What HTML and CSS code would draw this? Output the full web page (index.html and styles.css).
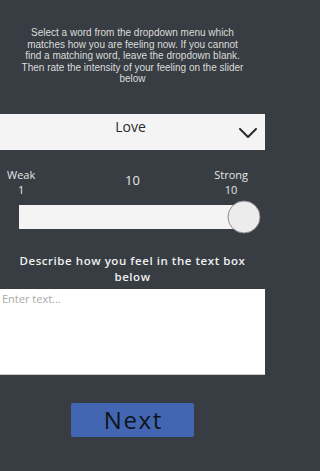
FILE: index.html
```html
<!DOCTYPE html>
<html lang="en">
<head>
<meta charset="utf-8">
<title>Feeling</title>
<link rel="stylesheet" href="styles.css">
</head>
<body>
<main class="screen">
  <p class="intro">Select a word from the dropdown menu which<br>matches how you are feeling now. If you cannot<br>find a matching word, leave the dropdown blank.<br>Then rate the intensity of your feeling on the slider<br>below</p>

  <div class="dropdown">
    <span class="dropdown-value">Love</span>
    <svg class="chevron" width="18" height="10" viewBox="0 0 18 10" aria-hidden="true">
      <polyline points="1,1 9,9 17,1" fill="none" stroke="#2b2b2b" stroke-width="2" stroke-linecap="round" stroke-linejoin="round"/>
    </svg>
  </div>

  <div class="rating">
    <div class="scale-end scale-min">Weak<br>1</div>
    <div class="current">10</div>
    <div class="scale-end scale-max">Strong<br>10</div>
  </div>

  <div class="slider">
    <div class="track"></div>
    <div class="knob"></div>
  </div>

  <p class="prompt">Describe how you feel in the text box<br>below</p>

  <textarea class="entry" placeholder="Enter text..."></textarea>

  <div class="actions">
    <button class="next" type="button">Next</button>
  </div>
</main>
</body>
</html>
```

FILE: styles.css
```css
html, body {
  margin: 0;
  padding: 0;
  background: #373d42;
}

.screen {
  width: 265px;
  height: 471px;
  overflow: hidden;
  font-family: "Open Sans", "Noto Sans", sans-serif;
}

.intro {
  margin: 0;
  padding: 27px 4px 0;
  font-family: "Liberation Sans", Arial, sans-serif;
  font-size: 10px;
  line-height: 11.5px;
  color: #dcdcdc;
  text-align: center;
}

.dropdown {
  margin-top: 29.5px;
  height: 36px;
  background: #f4f4f4;
  display: grid;
  grid-template-columns: 1fr auto 1fr;
  align-items: start;
}

.dropdown-value {
  grid-column: 2;
  padding-top: 3px;
  font-size: 14px;
  line-height: 19px;
  color: #2a2a2a;
  margin-right: 4px;
}

.chevron {
  grid-column: 3;
  justify-self: end;
  margin-top: 13.5px;
  margin-right: 8px;
}

.rating {
  margin-top: 17px;
  display: grid;
  grid-template-columns: 1fr auto 1fr;
  color: #e6e6e6;
}

.scale-end {
  font-size: 11px;
  line-height: 15px;
  text-align: center;
}

.scale-min {
  justify-self: start;
  margin-left: 7px;
}

.scale-max {
  justify-self: end;
  margin-right: 17px;
}

.current {
  font-size: 13px;
  line-height: 15px;
  padding-top: 6px;
}

.slider {
  position: relative;
  margin: 8px 21px 0 19px;
  height: 24px;
}

.track {
  height: 24px;
  background: #f4f4f4;
}

.knob {
  position: absolute;
  left: 100%;
  top: 50%;
  width: 31px;
  height: 31px;
  transform: translate(-50%, -50%);
  border-radius: 50%;
  background: #ececec;
  border: 1.5px solid #8c8c8c;
}

.prompt {
  margin: 24px 0 0;
  font-size: 11.5px;
  font-weight: 600;
  line-height: 15.5px;
  letter-spacing: 0.55px;
  color: #f0f0f0;
  text-align: center;
}

.entry {
  display: block;
  box-sizing: border-box;
  width: 100%;
  height: 86px;
  margin: 5px 0 0;
  padding: 2px 2px;
  border: none;
  border-bottom: 1px solid #c9c9c9;
  background: #ffffff;
  resize: none;
  font-family: "Open Sans", "Noto Sans", sans-serif;
  font-size: 11px;
  color: #333;
  outline: none;
}

.entry::placeholder {
  color: #a9a9a9;
}

.actions {
  display: flex;
  justify-content: center;
  margin-top: 28px;
}

.next {
  width: 123px;
  height: 34px;
  border: none;
  border-radius: 2px;
  background: #4266b1;
  color: #0e141a;
  font-family: "Open Sans", "Noto Sans", sans-serif;
  font-size: 24px;
  letter-spacing: 1.6px;
  padding: 0 0 0 1.6px;
  line-height: 34px;
}
```
